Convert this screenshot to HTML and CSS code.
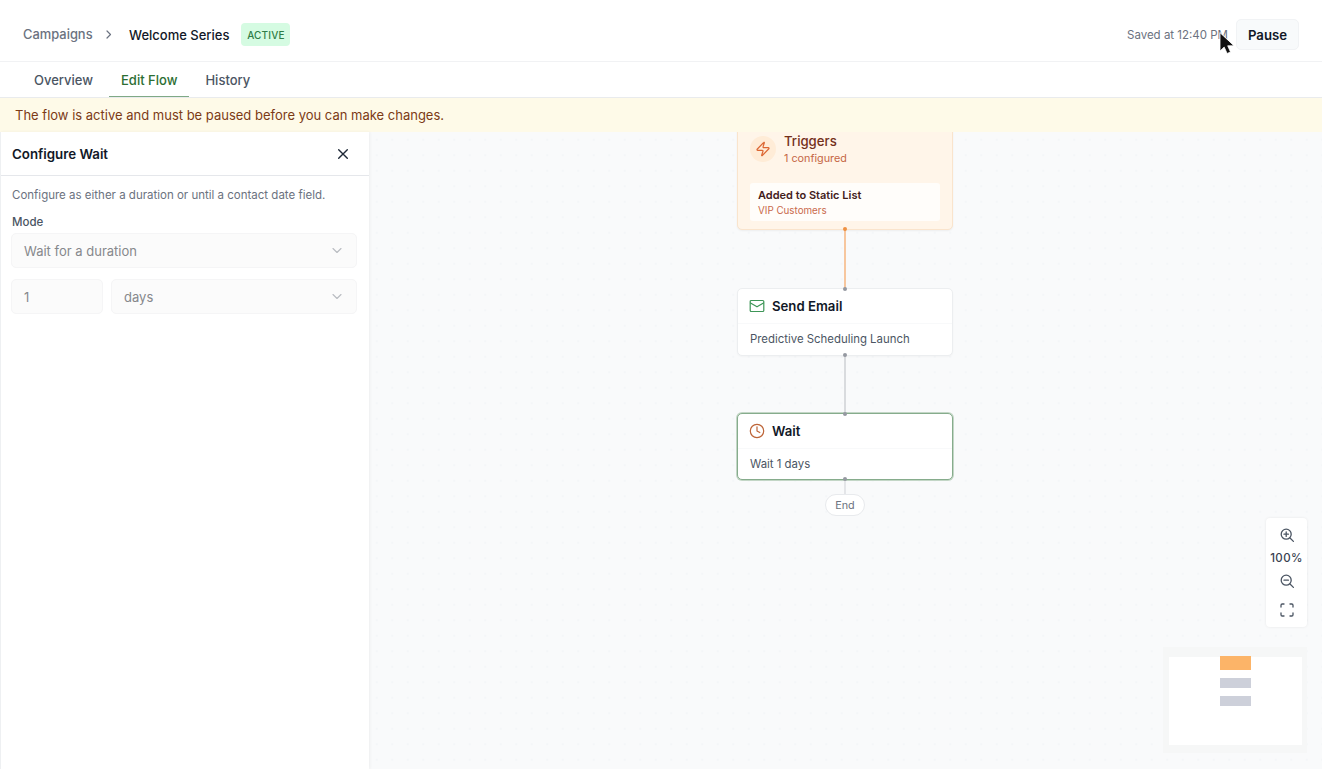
FILE: index.html
```html
<!DOCTYPE html>
<html lang="en">
<head>
    <meta charset="UTF-8">
    <meta name="viewport" content="width=device-width, initial-scale=1.0">
    <title>Welcome Series</title>
    <link rel="stylesheet" href="styles.css">
</head>
<body>
    <div class="app">
        <header class="header">
            <nav class="breadcrumb">
                <a class="crumb">Campaigns</a>
                <svg class="crumb-arrow" width="6" height="9" viewBox="0 0 6 9"><path d="M1 1l3.500 3.500L1 8"/></svg>
                <span class="crumb-current">Welcome Series</span>
                <span class="badge">ACTIVE</span>
            </nav>
            <div class="actions">
                <span class="saved">Saved at 12:40 PM</span>
                <button class="pause">Pause</button>
                <svg class="cursor" width="18" height="24" viewBox="0 0 18 24"><path d="M2 1v18l4.2-3.9 2.9 6.4 3.4-1.5-2.8-6.2H15.8z"/></svg>
            </div>
        </header>

        <nav class="tabs">
            <a class="tab">Overview</a>
            <a class="tab selected">Edit Flow</a>
            <a class="tab">History</a>
        </nav>

        <div class="banner">The flow is active and must be paused before you can make changes.</div>

        <main class="content">
            <aside class="panel">
                <div class="panel-head">
                    <h2>Configure Wait</h2>
                    <svg class="close" width="12" height="12" viewBox="0 0 12 12"><path d="M1.7 1.7l8.6 8.6M10.3 1.7l-8.6 8.6"/></svg>
                </div>
                <div class="panel-body">
                    <p class="help">Configure as either a duration or until a contact date field.</p>
                    <label class="label">Mode</label>
                    <div class="field">
                        <span>Wait for a duration</span>
                        <svg class="chevron" width="12" height="8" viewBox="0 0 12 8"><path d="M2 1.500L6 5.500l4-4"/></svg>
                    </div>
                    <div class="field-row">
                        <div class="field amount">1</div>
                        <div class="field unit">
                            <span>days</span>
                            <svg class="chevron" width="12" height="8" viewBox="0 0 12 8"><path d="M2 1.500L6 5.500l4-4"/></svg>
                        </div>
                    </div>
                </div>
            </aside>

            <section class="canvas">
                <svg class="edges" width="953" height="637" viewBox="369 132 953 637">
                    <path class="edge-orange" d="M845 229v60"/>
                    <path class="edge-gray" d="M845 355v58"/>
                    <path class="edge-light" d="M845 480v15"/>
                </svg>

                <div class="node trigger">
                    <div class="trigger-head">
                        <div class="trigger-icon">
                            <svg width="16" height="16" viewBox="0 0 24 24"><path d="M4 14a1 1 0 0 1-.78-1.63l9.9-10.2a.5.5 0 0 1 .86.46l-1.92 6.02A1 1 0 0 0 13 10h7a1 1 0 0 1 .78 1.63l-9.9 10.2a.5.5 0 0 1-.86-.46l1.92-6.02A1 1 0 0 0 11 14z"/></svg>
                        </div>
                        <div>
                            <div class="trigger-title">Triggers</div>
                            <div class="trigger-count">1 configured</div>
                        </div>
                    </div>
                    <div class="trigger-item">
                        <div class="item-name">Added to Static List</div>
                        <div class="item-sub">VIP Customers</div>
                    </div>
                    <i class="dot bottom orange"></i>
                </div>

                <div class="node step email">
                    <i class="dot top"></i>
                    <div class="step-head">
                        <svg class="icon-green" width="16" height="16" viewBox="0 0 16 16"><rect x="1.2" y="2.5" width="13.6" height="11" rx="1"/><path d="M1.5 5L8 8.8 14.5 5"/></svg>
                        <span>Send Email</span>
                    </div>
                    <div class="step-body">Predictive Scheduling Launch</div>
                    <i class="dot bottom"></i>
                </div>

                <div class="node step wait">
                    <i class="dot top"></i>
                    <div class="step-head">
                        <svg class="icon-orange" width="16" height="16" viewBox="0 0 16 16"><circle cx="8" cy="8" r="6.7"/><path d="M8 3.8V8l2.8 1.5"/></svg>
                        <span>Wait</span>
                    </div>
                    <div class="step-body">Wait 1 days</div>
                    <i class="dot bottom"></i>
                </div>

                <div class="node end">End</div>

                <div class="zoom">
                    <svg width="16" height="16" viewBox="0 0 16 16"><circle cx="7.2" cy="7.2" r="5"/><path d="M11 11l3.4 3.4M7.2 5v4.4M5 7.2h4.4"/></svg>
                    <span class="zoom-value">100%</span>
                    <svg width="16" height="16" viewBox="0 0 16 16"><circle cx="7.2" cy="7.2" r="5"/><path d="M11 11l3.4 3.4M5 7.2h4.4"/></svg>
                    <svg class="fit" width="16" height="16" viewBox="0 0 16 16"><path d="M2 5V3.200A1.200 1.200 0 0 1 3.200 2H5M11 2h1.800A1.200 1.200 0 0 1 14 3.200V5M14 11v1.800a1.200 1.200 0 0 1-1.200 1.200H11M5 14H3.200A1.200 1.200 0 0 1 2 12.800V11"/></svg>
                </div>

                <div class="minimap">
                    <div class="minimap-view">
                        <div class="mini mini-trigger"></div>
                        <div class="mini"></div>
                        <div class="mini"></div>
                    </div>
                </div>
            </section>
        </main>
    </div>
</body>
</html>
```
FILE: styles.css
```css
* {
    margin: 0;
    padding: 0;
    box-sizing: border-box;
}

body {
    font-family: Inter, "Liberation Sans", sans-serif;
    font-size: 13px;
    color: #111827;
    background-color: #fff;
}

svg {
    fill: none;
    flex-shrink: 0;
    stroke-linecap: round;
    stroke-linejoin: round;
}

.app {
    display: flex;
    flex-direction: column;
    height: 769px;
    overflow: hidden;
}

/* header */
.header {
    display: flex;
    justify-content: space-between;
    align-items: center;
    height: 62px;
    padding: 8px 23px 0;
    border-bottom: 1px solid #f1f2f4;
}

.breadcrumb {
    display: flex;
    align-items: center;
    font-weight: 500;
}

.crumb {
    width: 69px;
    color: #6b7280;
    font-size: 12.9px;
    font-weight: 450;
}

.crumb-arrow {
    margin: 0 17px 0 14px;
    stroke: #6b7280;
    stroke-width: 1.2;
}

.badge {
    margin-left: 12px;
    width: 49px;
    height: 23px;
    line-height: 24px;
    text-align: center;
    border-radius: 4px;
    background-color: #d5fbe2;
    color: #2f7d46;
    font-size: 10px;
    letter-spacing: 0.2px;
}

.actions {
    display: flex;
    align-items: center;
    gap: 8px;
    position: relative;
}

.saved {
    font-size: 11.5px;
    color: #6b7280;
}

.pause {
    width: 63px;
    height: 31px;
    border: 1px solid #f1f3f5;
    border-radius: 5px;
    background-color: #f8fafb;
    color: #111827;
    font: 600 13.2px Inter, sans-serif;
}

.cursor {
    position: absolute;
    left: 91px;
    top: 13px;
    fill: #111;
    stroke: #fff;
    stroke-width: 0.8;
}

.tabs {
    display: flex;
    gap: 4px;
    height: 36px;
    padding-left: 22px;
    border-bottom: 1px solid #e9ebed;
}

.tab {
    padding: 0 12px;
    height: 35px;
    line-height: 36px;
    font-weight: 500;
    color: #4b5563;
}

.selected {
    color: #2c6e33;
    border-bottom: 1px solid #7fa985;
}

.banner {
    height: 34px;
    padding-left: 15px;
    line-height: 35px;
    background-color: #fefae8;
    color: #7c3a16;
}

.content {
    display: flex;
    flex: 1;
}

/* config panel */
.panel {
    width: 369px;
    border-left: 1px solid #eef0f2;
    box-shadow: 1px 0 3px rgba(0, 0, 0, 0.05);
    background-color: #fff;
    z-index: 1;
}

.panel-head {
    display: flex;
    justify-content: space-between;
    align-items: center;
    height: 44px;
    padding: 0 20px 0 11px;
    border-bottom: 1px solid #e5e7eb;
}

.panel-head h2 {
    font-size: 13.3px;
    font-weight: 600;
}

.close {
    stroke: #1f2937;
    stroke-width: 1.4;
}

.panel-body {
    padding: 11px 12px 0 10px;
}

.help {
    margin-left: 1px;
    font-size: 11.5px;
    line-height: 16px;
    color: #6b7280;
}

.label {
    display: block;
    margin: 11px 0 3px 1px;
    font-size: 11.5px;
    font-weight: 500;
    line-height: 16px;
    color: #4b5563;
}

.field {
    display: flex;
    justify-content: space-between;
    align-items: center;
    height: 35px;
    padding: 0 13px 0 12px;
    border: 1px solid #f5f5f6;
    border-radius: 5px;
    background-color: #fbfbfb;
    color: #86888c;
}

.chevron {
    stroke: #b8bbc0;
    stroke-width: 1.1;
}

.field-row {
    display: flex;
    gap: 8px;
    margin-top: 11px;
}

.amount {
    width: 92px;
}

.unit {
    flex: 1;
}

/* flow canvas */
.canvas {
    position: relative;
    flex: 1;
    overflow: hidden;
    background-color: #f9fafb;
    background-image: radial-gradient(circle, #f4f6f8 0.8px, transparent 1px);
    background-size: 15.5px 15.5px;
}

.edges {
    position: absolute;
    left: 0;
    top: 0;
}

.edge-orange {
    stroke: #f7ba87;
    stroke-width: 1.6;
}

.edge-gray {
    stroke: #c3c6cc;
    stroke-width: 1.2;
}

.edge-light {
    stroke: #d5d8dd;
    stroke-width: 1.2;
}

.node {
    position: absolute;
    left: 368px;
    width: 216px;
}

.trigger {
    top: -10px;
    height: 108px;
    padding: 9px 12px 0;
    border: 1px solid #fae4cc;
    border-radius: 5px;
    background-color: #fff5e9;
    box-shadow: 0 1px 2px rgba(0, 0, 0, 0.05);
}

.trigger-head {
    display: flex;
    gap: 8px;
    height: 51px;
}

.trigger-icon {
    display: flex;
    justify-content: center;
    align-items: center;
    width: 26px;
    height: 26px;
    margin-top: 4px;
    border-radius: 50%;
    background-color: #ffecd7;
}

.trigger-icon svg {
    stroke: #dc6632;
    stroke-width: 1.8;
}

.trigger-title {
    font-size: 13.2px;
    font-weight: 500;
    line-height: 19px;
    color: #74301a;
}

.trigger-count {
    font-size: 10.8px;
    line-height: 15px;
    color: #c56645;
}

.trigger-item {
    height: 38px;
    padding: 5px 8px;
    border-radius: 3px;
    background-color: #fffdfa;
}

.item-name {
    font-size: 11px;
    font-weight: 600;
    line-height: 15px;
    color: #43201a;
}

.item-sub {
    font-size: 9.8px;
    line-height: 15px;
    color: #c9694b;
}

.step {
    height: 67px;
    border: 1px solid #eceef0;
    border-radius: 5px;
    background-color: #fff;
    box-shadow: 0 1px 2px rgba(0, 0, 0, 0.03);
}

.email {
    top: 156px;
    height: 68px;
}

.wait {
    top: 281px;
    border-color: #86ac8c;
    box-shadow: 0 0 0 1px #c3d6c6;
}

.step-head {
    display: flex;
    align-items: center;
    gap: 7px;
    height: 35px;
    padding-left: 11px;
    border-bottom: 1px solid #f8f9fa;
    font-size: 13.2px;
    font-weight: 600;
}

.step-body {
    padding-left: 12px;
    font-size: 11.4px;
    line-height: 31px;
    color: #4b5563;
}

.icon-green {
    stroke: #3e9658;
    stroke-width: 1.2;
}

.icon-orange {
    stroke: #bd6437;
    stroke-width: 1.2;
}

.dot {
    position: absolute;
    left: 105px;
    width: 4px;
    height: 4px;
    border-radius: 50%;
    background-color: #9599a1;
}

.top {
    top: -2px;
}

.bottom {
    bottom: -2px;
}

.orange {
    background-color: #ef9142;
}

.end {
    left: 456px;
    top: 362px;
    width: 40px;
    height: 22px;
    border: 1px solid #e8eaed;
    border-radius: 11px;
    background-color: #fff;
    font-size: 10.8px;
    line-height: 21px;
    text-align: center;
    color: #6b7280;
}

/* floating controls */
.zoom {
    position: absolute;
    left: 897px;
    top: 386px;
    display: flex;
    flex-direction: column;
    align-items: center;
    width: 41px;
    height: 109px;
    padding-top: 9px;
    border-radius: 4px;
    background-color: #fff;
    box-shadow: 0 0 3px rgba(0, 0, 0, 0.08);
}

.zoom svg {
    stroke: #4b5563;
    stroke-width: 1.3;
}

.zoom-value {
    height: 30px;
    line-height: 30px;
    font-size: 11.5px;
    font-weight: 500;
    letter-spacing: 0.4px;
    color: #374151;
}

.zoom .fit {
    margin-top: 13px;
}

.minimap {
    position: absolute;
    left: 794px;
    top: 515px;
    width: 144px;
    height: 106px;
    padding: 10px 5px 8px 6px;
    background-color: #f6f7f7;
}

.minimap-view {
    display: flex;
    flex-direction: column;
    align-items: center;
    gap: 8px;
    height: 88px;
    background-color: #fff;
}

.mini {
    width: 31px;
    height: 10px;
    background-color: #cdd0da;
}

.mini-trigger {
    height: 14px;
    margin-top: -1px;
    background-color: #fcb468;
}
```
